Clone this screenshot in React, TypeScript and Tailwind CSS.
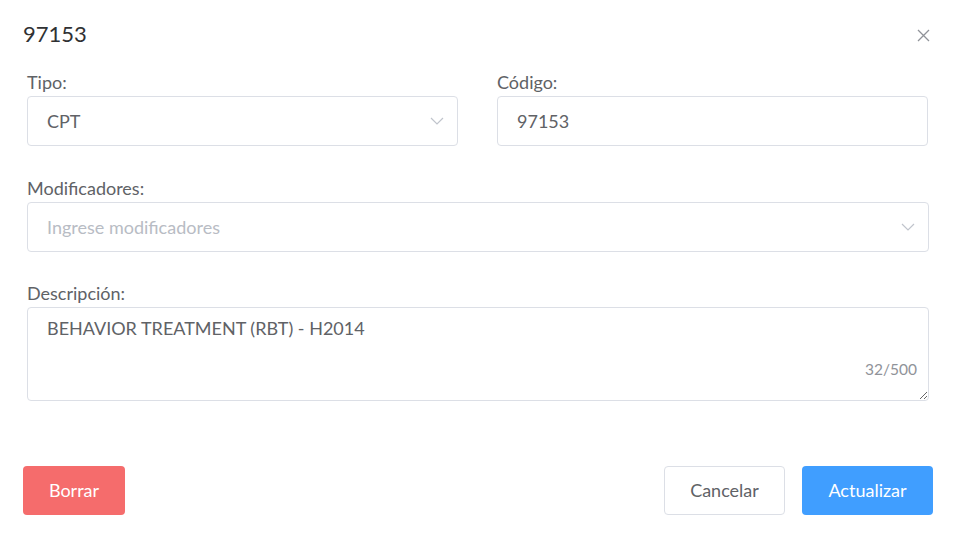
import React from "react";

const font = { fontFamily: "Lato, 'Open Sans', sans-serif" };

function Chevron() {
  return (
    <svg width="14" height="8" viewBox="0 0 14 8" className="shrink-0">
      <path d="M1 1 L7 7 L13 1" fill="none" stroke="#c0c4cc" strokeWidth="1.2" />
    </svg>
  );
}

export default function App() {
  return (
    <div
      className="w-[956px] h-[537px] bg-white flex flex-col text-[#606266]"
      style={font}
    >
      <div className="flex items-center justify-between pl-[23px] pr-[26px] pt-[19px] h-[49px]">
        <div className="text-[22px] leading-[28px] text-[#303133]">97153</div>
        <svg width="13" height="13" viewBox="0 0 13 13" className="mt-[2px]">
          <path d="M1 1 L12 12 M12 1 L1 12" stroke="#909399" strokeWidth="1.3" />
        </svg>
      </div>

      <div className="px-[27px] pt-[21px] flex flex-col">
        <div className="grid grid-cols-[431px_431px] gap-x-[39px]">
          <div className="flex flex-col">
            <label className="text-[18px] leading-[24px] mb-[2px]">Tipo:</label>
            <div className="h-[50px] border border-[#dcdfe6] rounded-[4px] flex items-center justify-between pl-[19px] pr-[13px]">
              <span className="text-[18px]">CPT</span>
              <Chevron />
            </div>
          </div>
          <div className="flex flex-col">
            <label className="text-[18px] leading-[24px] mb-[2px]">Código:</label>
            <div className="h-[50px] border border-[#dcdfe6] rounded-[4px] flex items-center pl-[19px]">
              <span className="text-[18px]">97153</span>
            </div>
          </div>
        </div>

        <div className="flex flex-col mt-[30px]">
          <label className="text-[18px] leading-[24px] mb-[2px]">Modificadores:</label>
          <div className="h-[50px] border border-[#dcdfe6] rounded-[4px] flex items-center justify-between pl-[19px] pr-[13px]">
            <span className="text-[18px] text-[#b8bcc4]">Ingrese modificadores</span>
            <Chevron />
          </div>
        </div>

        <div className="flex flex-col mt-[29px]">
          <label className="text-[18px] leading-[24px] mb-[2px]">Descripción:</label>
          <div className="relative">
            <textarea
              readOnly
              defaultValue="BEHAVIOR TREATMENT (RBT) - H2014"
              className="block w-full h-[94px] border border-[#dcdfe6] rounded-[4px] pl-[19px] pt-[8px] text-[18px] leading-[24px] text-[#606266] outline-none resize-y"
              style={font}
            />
            <span className="absolute right-[12px] bottom-[22px] text-[15.5px] leading-[20px] text-[#909399]">
              32/500
            </span>
          </div>
        </div>
      </div>

      <div className="flex items-center justify-between px-[23px] mt-[65px]">
        <button className="w-[102px] h-[49px] rounded-[4px] bg-[#f56c6c] text-white text-[18px]">
          Borrar
        </button>
        <div className="flex gap-[17px]">
          <button className="w-[121px] h-[49px] rounded-[4px] border border-[#dcdfe6] bg-white text-[#606266] text-[18px]">
            Cancelar
          </button>
          <button className="w-[131px] h-[49px] rounded-[4px] bg-[#409eff] text-white text-[18px]">
            Actualizar
          </button>
        </div>
      </div>
    </div>
  );
}
